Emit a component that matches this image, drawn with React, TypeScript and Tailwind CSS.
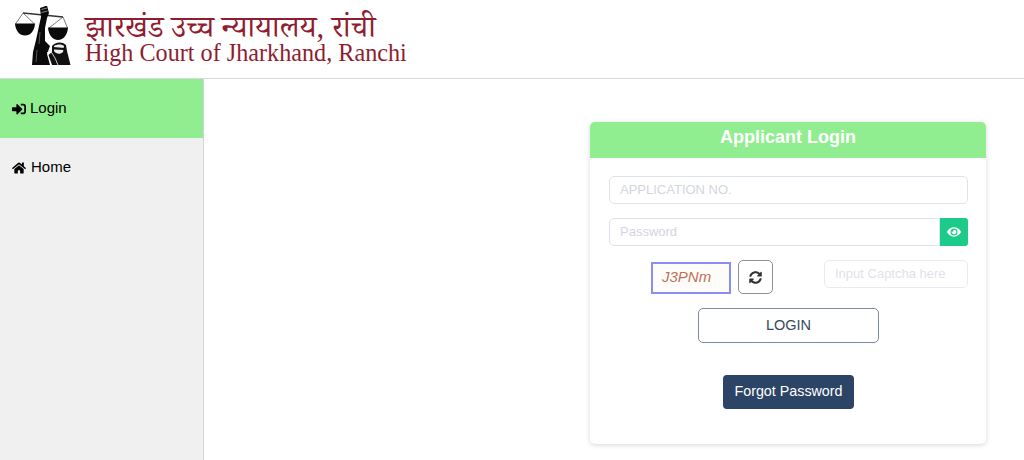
import { FaEye, FaHome, FaSignInAlt, FaSyncAlt } from "react-icons/fa";

function Logo() {
  return (
    <svg width="58" height="60" viewBox="14 6 58 60" className="shrink-0">
      <path d="M23 13 L63 17" stroke="#333" strokeWidth="1.3" fill="none" />
      <path d="M23 13 L15.500 24 M23 13 L34.500 24 M63 17 L49 28 M63 17 L67.500 28" stroke="#444" strokeWidth="0.7" fill="none" />
      <path d="M15 23.500 H35 C34.500 31 30.500 35.500 25 35.500 C19.500 35.500 15.500 31 15 23.500 Z" fill="#0a0a0a" />
      <path d="M48 27.500 H68 C67.500 35 63.500 40 58 40 C52.500 40 48.500 35 48 27.500 Z" fill="#0a0a0a" />
      <path d="M40 8 L47 5.500 L49 13 L47 18 L45 28 L45 41 L50 46 L47 54 L50 65 L32 65 L33 52 L36 40 L39 26 L41 17 Z" fill="#0a0a0a" />
      <path d="M41.500 9.500 L47 8 M41.500 12.500 L47.500 11" stroke="#aaa" strokeWidth="0.8" />
      <path d="M40 32 L39 44 M37 50 L36 62" stroke="#777" strokeWidth="0.7" />
      <path d="M52 46 C55 42 62 41 66 45 L67 51 L68 55 L70.500 65 L52 65 L48.500 55 L52 52 Z" fill="#111" />
      <path d="M54 46 C57 44 62 44 64 46 L63 52 C60 55 56 54 54 51 Z" fill="#efefef" />
      <path d="M53.500 47 L64.500 48 L64 50 L54 49.500 Z" fill="#111" />
      <path d="M47 53 L50 50 L55 58 L58 65" stroke="#ddd" strokeWidth="0.9" fill="none" />
    </svg>
  );
}

export default function App() {
  return (
    <div className="h-[460px] w-[1024px] overflow-hidden bg-white font-['Liberation_Sans',Arial,sans-serif]">
      <header className="flex h-[79px] items-start gap-[13px] border-b border-[#d9d9d9] pl-[14px] pt-[6px]">
        <Logo />
        <div className="mt-[7px] text-[#8f1d2f] font-['Liberation_Serif','Noto_Serif_Devanagari','Noto_Sans_Devanagari','Noto_Sans',serif]">
          <div className="text-[30.5px] leading-[28px]">झारखंड उच्च न्यायालय, रांची</div>
          <div className="text-[24.2px] leading-[23px]">High Court of Jharkhand, Ranchi</div>
        </div>
      </header>
      <div className="flex h-[381px]">
        <aside className="w-[204px] shrink-0 border-r border-[#d4d4d4] bg-[#f0f0f0] text-black">
          <div className="flex h-[59px] items-center gap-[4px] bg-[#90ee90] pl-[12px] text-[15px]">
            <FaSignInAlt className="text-[14px]" />
            <span>Login</span>
          </div>
          <div className="flex h-[59px] items-center gap-[5px] pl-[12px] text-[15px]">
            <FaHome className="text-[14px]" />
            <span>Home</span>
          </div>
        </aside>
        <main className="flex-1 pl-[386px] pt-[43px]">
          <section className="h-[322px] w-[396px] overflow-hidden rounded-[5px] bg-white shadow-[0_1px_5px_rgba(0,0,0,0.16)]">
            <div className="h-[36px] bg-[#90ee90] pt-[3px] text-center text-[18px] leading-[24px] font-bold text-white">Applicant Login</div>
            <div className="pl-[19px] pr-[18px] pt-[18px]">
              <div className="flex h-[28px] items-center rounded-[5px] border border-[#dfe1ee] pl-[10px] text-[13px] text-[#d3d6e0]">APPLICATION NO.</div>
              <div className="mt-[14px] flex h-[28px]">
                <div className="flex flex-1 items-center rounded-l-[5px] border border-[#dfe1ee] pl-[10px] text-[13px] text-[#d3d6e0]">Password</div>
                <div className="flex w-[28px] items-center justify-center rounded-r-[3px] bg-[#1ccb8a] text-white">
                  <FaEye className="text-[14px]" />
                </div>
              </div>
              <div className="mt-[14px] flex items-start">
                <div className="ml-[42px] mt-[2px] flex h-[32px] w-[80px] items-center border-2 border-[#8c8cf5] bg-[#fdfcf8] pb-[2px] pl-[9px] text-[15px] text-[#c0705c] italic">J3PNm</div>
                <div className="ml-[7px] flex h-[34px] w-[35px] items-center justify-center rounded-[5px] border border-[#8b929c] text-[#333]">
                  <FaSyncAlt className="text-[13px]" />
                </div>
                <div className="ml-[51px] flex h-[28px] w-[144px] items-center rounded-[5px] border border-[#e9ebf3] pl-[10px] text-[13px] text-[#dfe2ea]">Input Captcha here</div>
              </div>
              <div className="mt-[14px] flex justify-center">
                <div className="flex h-[35px] w-[181px] items-center justify-center rounded-[5px] border border-[#7f8ba0] text-[14.5px] text-[#34495e]">LOGIN</div>
              </div>
              <div className="mt-[32px] flex justify-center">
                <div className="flex h-[34px] w-[131px] items-center justify-center rounded-[4px] bg-[#2c4466] text-[14.3px] text-white">Forgot Password</div>
              </div>
            </div>
          </section>
        </main>
      </div>
    </div>
  );
}
